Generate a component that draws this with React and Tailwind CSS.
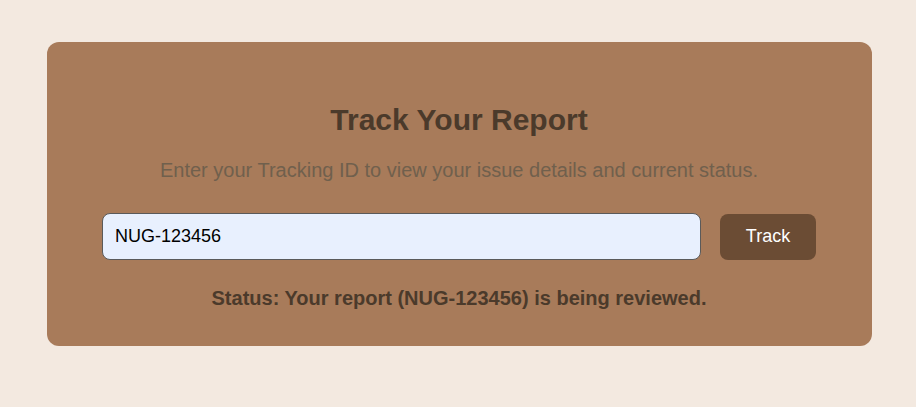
import { useState } from "react";

const App = () => {
  const [trackingId, setTrackingId] = useState("NUG-123456");

  return (
    <div
      className="min-h-screen w-full bg-[#f3e9e0] pt-[42px] pl-[47px] pr-[44px]"
      style={{ fontFamily: '"Liberation Sans", Arial, sans-serif' }}
    >
      {/* Tracking card */}
      <div className="bg-[#a87b5a] rounded-[12px] pl-[55px] pr-[56px] pt-[61px] pb-[36px] flex flex-col items-center">
        <h2 className="text-[30px] leading-[34px] font-bold text-[#4b3a2b]">
          Track Your Report
        </h2>
        <p className="mt-[22px] text-[20px] leading-[23px] text-[#70604d]">
          Enter your Tracking ID to view your issue details and current status.
        </p>

        <div className="mt-[31px] w-full flex items-center gap-[19px]">
          <input
            type="text"
            value={trackingId}
            onChange={(e) => setTrackingId(e.target.value)}
            className="flex-1 h-[47px] px-[12px] bg-[#e8f0fe] border border-[#5a5a5a] rounded-[8px] text-[18px] text-black outline-none"
          />
          <button className="w-[96px] h-[46px] bg-[#6b4c34] text-white text-[18px] rounded-[8px]">
            Track
          </button>
        </div>

        <p className="mt-[27px] text-[20px] leading-[23px] font-bold text-[#4b3a2b]">
          Status: Your report (NUG-123456) is being reviewed.
        </p>
      </div>
    </div>
  );
};

export default App;
